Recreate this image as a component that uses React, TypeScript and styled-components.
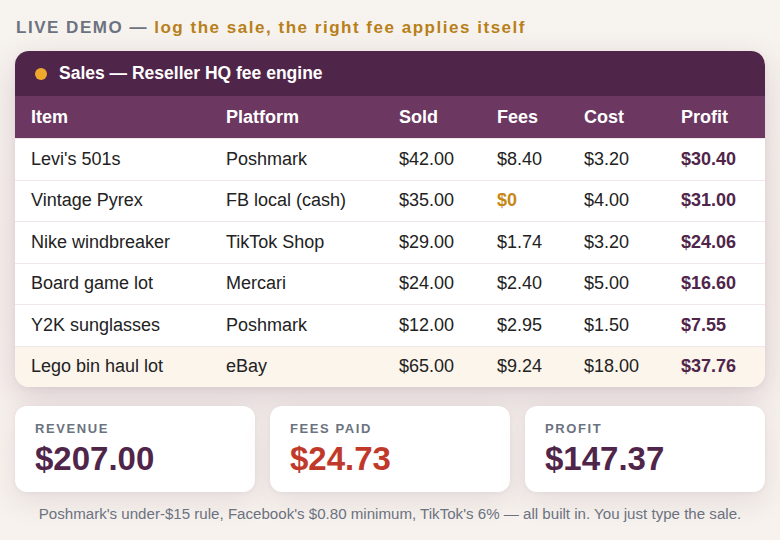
import React from "react";
import styled, { createGlobalStyle } from "styled-components";

const GlobalStyle = createGlobalStyle`
  html, body {
    margin: 0;
    padding: 0;
    background: #f7f2ee;
    font-family: "Liberation Sans", Arial, sans-serif;
  }
`;

const Page = styled.div`
  width: 780px;
  height: 540px;
  box-sizing: border-box;
  padding: 17px 15px 0;
  background: linear-gradient(180deg, #f7f3ef 0%, #f6efeb 50%, #f7f2ee 100%);
`;

const Eyebrow = styled.div`
  font-size: 17px;
  font-weight: 700;
  letter-spacing: 1.52px;
  color: #6b7280;
  line-height: 22px;
  padding-left: 1px;
`;

const Accent = styled.span`
  color: #b8801a;
`;

const TableCard = styled.div`
  margin-top: 12px;
  background: #ffffff;
  border-radius: 14px;
  overflow: hidden;
  box-shadow: 0 12px 34px rgba(79, 37, 72, 0.16), 0 2px 6px rgba(79, 37, 72, 0.06);
`;

const TitleBar = styled.div`
  height: 45px;
  background: #50254a;
  display: flex;
  align-items: center;
  gap: 12px;
  padding: 0 20px;
  color: #ffffff;
  font-size: 17.5px;
  font-weight: 700;
`;

const Dot = styled.span`
  width: 12px;
  height: 12px;
  border-radius: 50%;
  background: #f0a92c;
`;

const columns = "195px 173px 98px 87px 97px 100px";

const HeadRow = styled.div`
  display: grid;
  grid-template-columns: ${columns};
  height: 42px;
  align-items: center;
  background: #6c3862;
  color: #ffffff;
  font-size: 18px;
  font-weight: 700;
`;

const Row = styled.div<{ $highlight?: boolean }>`
  display: grid;
  grid-template-columns: ${columns};
  height: 41.5px;
  align-items: center;
  background: ${({ $highlight }) => ($highlight ? "#fcf5ec" : "#ffffff")};
  border-top: 1px solid #f0e6ec;
  box-sizing: border-box;
  color: #222222;
  font-size: 18px;
`;

const Cell = styled.div<{ $tone?: "profit" | "free" }>`
  padding-left: 16px;
  white-space: nowrap;
  font-weight: ${({ $tone }) => ($tone ? 700 : "inherit")};
  color: ${({ $tone }) =>
    $tone === "profit" ? "#50254a" : $tone === "free" ? "#c58816" : "inherit"};
`;

const Stats = styled.div`
  display: grid;
  grid-template-columns: repeat(3, 1fr);
  gap: 15px;
  margin-top: 19px;
`;

const StatCard = styled.div`
  height: 86px;
  box-sizing: border-box;
  background: #ffffff;
  border-radius: 12px;
  padding: 15px 20px 0;
  box-shadow: 0 10px 28px rgba(79, 37, 72, 0.1), 0 1px 4px rgba(79, 37, 72, 0.05);
`;

const StatLabel = styled.div`
  font-size: 13px;
  font-weight: 700;
  letter-spacing: 1.6px;
  color: #6b7280;
  line-height: 16px;
`;

const StatValue = styled.div<{ $color: string }>`
  margin-top: 2px;
  font-size: 33px;
  font-weight: 700;
  line-height: 40px;
  color: ${({ $color }) => $color};
`;

const Footnote = styled.div`
  margin-top: 13px;
  text-align: center;
  font-size: 15.1px;
  color: #6b7280;
`;

type Sale = {
  item: string;
  platform: string;
  sold: string;
  fees: string;
  cost: string;
  profit: string;
  free?: boolean;
};

const sales: Sale[] = [
  { item: "Levi's 501s", platform: "Poshmark", sold: "$42.00", fees: "$8.40", cost: "$3.20", profit: "$30.40" },
  { item: "Vintage Pyrex", platform: "FB local (cash)", sold: "$35.00", fees: "$0", cost: "$4.00", profit: "$31.00", free: true },
  { item: "Nike windbreaker", platform: "TikTok Shop", sold: "$29.00", fees: "$1.74", cost: "$3.20", profit: "$24.06" },
  { item: "Board game lot", platform: "Mercari", sold: "$24.00", fees: "$2.40", cost: "$5.00", profit: "$16.60" },
  { item: "Y2K sunglasses", platform: "Poshmark", sold: "$12.00", fees: "$2.95", cost: "$1.50", profit: "$7.55" },
  { item: "Lego bin haul lot", platform: "eBay", sold: "$65.00", fees: "$9.24", cost: "$18.00", profit: "$37.76" },
];

const App: React.FC = () => {
  return (
    <Page>
      <GlobalStyle />
      <Eyebrow>
        LIVE DEMO — <Accent>log the sale, the right fee applies itself</Accent>
      </Eyebrow>
      <TableCard>
        <TitleBar>
          <Dot />
          Sales — Reseller HQ fee engine
        </TitleBar>
        <HeadRow>
          <Cell>Item</Cell>
          <Cell>Platform</Cell>
          <Cell>Sold</Cell>
          <Cell>Fees</Cell>
          <Cell>Cost</Cell>
          <Cell>Profit</Cell>
        </HeadRow>
        {sales.map((s, i) => (
          <Row key={s.item} $highlight={i === sales.length - 1}>
            <Cell>{s.item}</Cell>
            <Cell>{s.platform}</Cell>
            <Cell>{s.sold}</Cell>
            <Cell $tone={s.free ? "free" : undefined}>{s.fees}</Cell>
            <Cell>{s.cost}</Cell>
            <Cell $tone="profit">{s.profit}</Cell>
          </Row>
        ))}
      </TableCard>
      <Stats>
        <StatCard>
          <StatLabel>REVENUE</StatLabel>
          <StatValue $color="#50254a">$207.00</StatValue>
        </StatCard>
        <StatCard>
          <StatLabel>FEES PAID</StatLabel>
          <StatValue $color="#c0392b">$24.73</StatValue>
        </StatCard>
        <StatCard>
          <StatLabel>PROFIT</StatLabel>
          <StatValue $color="#50254a">$147.37</StatValue>
        </StatCard>
      </Stats>
      <Footnote>
        Poshmark's under-$15 rule, Facebook's $0.80 minimum, TikTok's 6% — all built in. You just type the sale.
      </Footnote>
    </Page>
  );
};

export default App;
